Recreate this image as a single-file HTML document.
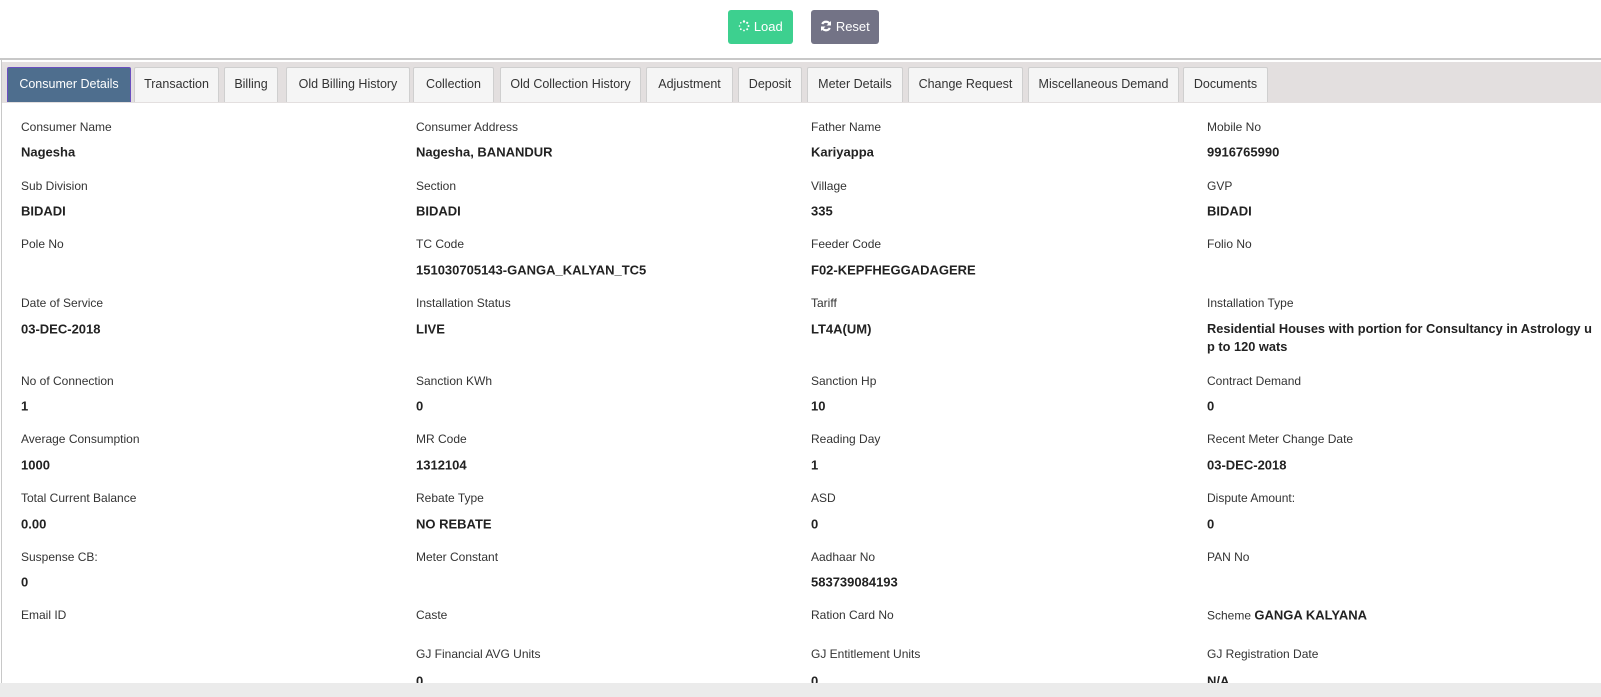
<!DOCTYPE html>
<html><head><meta charset="utf-8"><style>
*{margin:0;padding:0;box-sizing:border-box}
body{width:1601px;height:697px;background:#fff;font-family:"Liberation Sans",sans-serif;position:relative;overflow:hidden;color:#333}
.btn{position:absolute;top:10px;height:34px;border-radius:3px;color:#fff;font-size:13px;line-height:34px;text-align:center}
.topline{position:absolute;left:0;top:58px;width:1601px;height:2px;background:#c8c8c8}
.lb{position:absolute;left:1px;top:59px;width:1px;height:630px;background:#c8c8c8}
.bar{position:absolute;left:2px;top:62px;width:1599px;height:41px;background:#e3dfdf}
.tab{position:absolute;top:67px;height:35px;background:#f5f5f5;border:1px solid #cfcfcf;border-bottom:none;font-size:12.5px;line-height:33px;text-align:center;color:#333;border-radius:2px 2px 0 0}
.tab.act{background:#4e6e8e;color:#fff;border:1px solid #6a4fc0;border-bottom:none}
.l{position:absolute;font-size:12px;color:#333;transform:translateY(-50%);white-space:nowrap}
.v{position:absolute;font-size:13px;font-weight:bold;color:#222;transform:translateY(-50%);white-space:nowrap}
.foot{position:absolute;left:0;top:683px;width:1601px;height:14px;background:#ebebeb}
</style></head><body>
<div class="btn" style="left:728px;width:65px;background:#3dd08f">
<svg width="12" height="12" viewBox="0 0 12 12" style="vertical-align:-1px"><g fill="#fff"><circle cx="6" cy="1.5" r="1.2"/><circle cx="9.2" cy="2.8" r="1.1"/><circle cx="10.5" cy="6" r="1"/><circle cx="9.2" cy="9.2" r="1"/><circle cx="6" cy="10.5" r="0.9"/><circle cx="2.8" cy="9.2" r="0.9"/><circle cx="1.5" cy="6" r="0.8"/><circle cx="2.8" cy="2.8" r="0.8"/></g></svg> Load</div>
<div class="btn" style="left:811px;width:68px;background:#737386">
<svg width="12" height="12" viewBox="0 0 12 12" style="vertical-align:-1px"><path d="M10 4.5A4.3 4.3 0 0 0 2.2 4" stroke="#fff" stroke-width="2.2" fill="none"/><path d="M11 1v4.5H6.5z" fill="#fff"/><path d="M2 7.5A4.3 4.3 0 0 0 9.8 8" stroke="#fff" stroke-width="2.2" fill="none"/><path d="M1 11V6.5h4.5z" fill="#fff"/></svg> Reset</div>
<div class="topline"></div>
<div class="lb"></div>
<div class="bar"></div>
<div class="tab act" style="left:7px;width:124px">Consumer Details</div>
<div class="tab" style="left:134px;width:85px">Transaction</div>
<div class="tab" style="left:224px;width:54px">Billing</div>
<div class="tab" style="left:286px;width:124px">Old Billing History</div>
<div class="tab" style="left:413px;width:81px">Collection</div>
<div class="tab" style="left:500px;width:141px">Old Collection History</div>
<div class="tab" style="left:646px;width:87px">Adjustment</div>
<div class="tab" style="left:738px;width:64px">Deposit</div>
<div class="tab" style="left:807px;width:96px">Meter Details</div>
<div class="tab" style="left:908px;width:115px">Change Request</div>
<div class="tab" style="left:1028px;width:151px">Miscellaneous Demand</div>
<div class="tab" style="left:1183px;width:85px">Documents</div>

<div class="l" style="left:21px;top:127px">Consumer Name</div><div class="v" style="left:21px;top:152px">Nagesha</div>
<div class="l" style="left:416px;top:127px">Consumer Address</div><div class="v" style="left:416px;top:152px">Nagesha, BANANDUR</div>
<div class="l" style="left:811px;top:127px">Father Name</div><div class="v" style="left:811px;top:152px">Kariyappa</div>
<div class="l" style="left:1207px;top:127px">Mobile No</div><div class="v" style="left:1207px;top:152px">9916765990</div>

<div class="l" style="left:21px;top:186px">Sub Division</div><div class="v" style="left:21px;top:211px">BIDADI</div>
<div class="l" style="left:416px;top:186px">Section</div><div class="v" style="left:416px;top:211px">BIDADI</div>
<div class="l" style="left:811px;top:186px">Village</div><div class="v" style="left:811px;top:211px">335</div>
<div class="l" style="left:1207px;top:186px">GVP</div><div class="v" style="left:1207px;top:211px">BIDADI</div>

<div class="l" style="left:21px;top:244px">Pole No</div>
<div class="l" style="left:416px;top:244px">TC Code</div><div class="v" style="left:416px;top:270px">151030705143-GANGA_KALYAN_TC5</div>
<div class="l" style="left:811px;top:244px">Feeder Code</div><div class="v" style="left:811px;top:270px">F02-KEPFHEGGADAGERE</div>
<div class="l" style="left:1207px;top:244px">Folio No</div>

<div class="l" style="left:21px;top:303px">Date of Service</div><div class="v" style="left:21px;top:329px">03-DEC-2018</div>
<div class="l" style="left:416px;top:303px">Installation Status</div><div class="v" style="left:416px;top:329px">LIVE</div>
<div class="l" style="left:811px;top:303px">Tariff</div><div class="v" style="left:811px;top:329px">LT4A(UM)</div>
<div class="l" style="left:1207px;top:303px">Installation Type</div><div class="v" style="left:1207px;top:338px;line-height:18px;font-size:12.8px">Residential Houses with portion for Consultancy in Astrology u<br>p to 120 wats</div>

<div class="l" style="left:21px;top:381px">No of Connection</div><div class="v" style="left:21px;top:406px">1</div>
<div class="l" style="left:416px;top:381px">Sanction KWh</div><div class="v" style="left:416px;top:406px">0</div>
<div class="l" style="left:811px;top:381px">Sanction Hp</div><div class="v" style="left:811px;top:406px">10</div>
<div class="l" style="left:1207px;top:381px">Contract Demand</div><div class="v" style="left:1207px;top:406px">0</div>

<div class="l" style="left:21px;top:439px">Average Consumption</div><div class="v" style="left:21px;top:465px">1000</div>
<div class="l" style="left:416px;top:439px">MR Code</div><div class="v" style="left:416px;top:465px">1312104</div>
<div class="l" style="left:811px;top:439px">Reading Day</div><div class="v" style="left:811px;top:465px">1</div>
<div class="l" style="left:1207px;top:439px">Recent Meter Change Date</div><div class="v" style="left:1207px;top:465px">03-DEC-2018</div>

<div class="l" style="left:21px;top:498px">Total Current Balance</div><div class="v" style="left:21px;top:524px">0.00</div>
<div class="l" style="left:416px;top:498px">Rebate Type</div><div class="v" style="left:416px;top:524px">NO REBATE</div>
<div class="l" style="left:811px;top:498px">ASD</div><div class="v" style="left:811px;top:524px">0</div>
<div class="l" style="left:1207px;top:498px">Dispute Amount:</div><div class="v" style="left:1207px;top:524px">0</div>

<div class="l" style="left:21px;top:557px">Suspense CB:</div><div class="v" style="left:21px;top:582px">0</div>
<div class="l" style="left:416px;top:557px">Meter Constant</div>
<div class="l" style="left:811px;top:557px">Aadhaar No</div><div class="v" style="left:811px;top:582px">583739084193</div>
<div class="l" style="left:1207px;top:557px">PAN No</div>

<div class="l" style="left:21px;top:615px">Email ID</div>
<div class="l" style="left:416px;top:615px">Caste</div>
<div class="l" style="left:811px;top:615px">Ration Card No</div>
<div class="l" style="left:1207px;top:615px">Scheme <b style="font-size:13px;color:#222">GANGA KALYANA</b></div>

<div class="l" style="left:416px;top:654px">GJ Financial AVG Units</div><div class="v" style="left:416px;top:681px">0</div>
<div class="l" style="left:811px;top:654px">GJ Entitlement Units</div><div class="v" style="left:811px;top:681px">0</div>
<div class="l" style="left:1207px;top:654px">GJ Registration Date</div><div class="v" style="left:1207px;top:681px">N/A</div>
<div class="foot"></div>
</body></html>
